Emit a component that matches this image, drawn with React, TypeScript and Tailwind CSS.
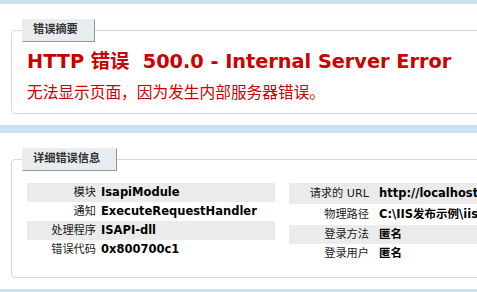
import React from "react";

const leftRows: [string, string][] = [
  ["模块", "IsapiModule"],
  ["通知", "ExecuteRequestHandler"],
  ["处理程序", "ISAPI-dll"],
  ["错误代码", "0x800700c1"],
];

const rightRows: [string, string, string][] = [
  ["请求的 URL", "http://localhost:80/test/default.aspx", "h-[21px]"],
  ["物理路径", "C:\\IIS发布示例\\iis\\test\\default.aspx", "h-[21px]"],
  ["登录方法", "匿名", "h-[19px]"],
  ["登录用户", "匿名", "h-[19px]"],
];

function Legend({ children }: { children: React.ReactNode }) {
  return (
    <legend className="ml-[-5px] pt-[2px] pb-[4px] pl-[10px] pr-[16px] leading-[15px] font-bold text-[#333333] bg-[#E7ECF0] border-t border-l border-t-[#EDEDED] border-l-[#EDEDED] border-r border-b border-r-[#969696] border-b-[#969696]">
      {children}
    </legend>
  );
}

export default function App() {
  return (
    <div className="w-[477px] h-[292px] overflow-hidden bg-[#CBE1EF] pt-[4px] font-['DejaVu_Sans','Noto_Sans_CJK_SC',sans-serif] text-[11.2px]">
      <div className="w-[700px] bg-white pt-[15px] pb-[11px]">
        <fieldset className="ml-[11px] border border-[#D0D8E0] rounded-[4px] pl-[15px] pr-[15px] pb-[10px] min-w-0">
          <Legend>错误摘要</Legend>
          <h2 className="mt-[8px] text-[19.3px] leading-[24px] font-bold text-[#CC0000] whitespace-nowrap">
            HTTP 错误 &nbsp;500.0 - Internal Server Error
          </h2>
          <h3 className="mt-[9px] text-[15.7px] leading-[20px] text-[#CC0000] whitespace-nowrap">
            无法显示页面，因为发生内部服务器错误。
          </h3>
        </fieldset>
      </div>
      <div className="w-[700px] bg-white mt-[8px] pt-[15px] pb-[11px]">
        <fieldset className="ml-[11px] border border-[#D0D8E0] rounded-[4px] pl-[15px] pr-[15px] pb-[14px] min-w-0">
          <Legend>详细错误信息</Legend>
          <div className="mt-[12px] flex items-start gap-[14px]">
            <div className="w-[248px] flex flex-col">
              {leftRows.map(([k, v], i) => (
                <div
                  key={k}
                  className={`h-[19px] flex items-center leading-[13px] ${i % 2 === 0 ? "bg-[#EBEBEB]" : ""}`}
                >
                  <div className="w-[72px] shrink-0 text-right pr-[3px] text-[#1a1a1a] whitespace-nowrap">{k}</div>
                  <div className="pl-[2px] text-[11.5px] font-bold text-black whitespace-nowrap">{v}</div>
                </div>
              ))}
            </div>
            <div className="w-[380px] flex flex-col">
              {rightRows.map(([k, v, h], i) => (
                <div
                  key={k}
                  className={`${h} flex items-center leading-[13px] ${i % 2 === 0 ? "bg-[#EBEBEB]" : ""}`}
                >
                  <div className="w-[85px] shrink-0 text-right pr-[5px] text-[#1a1a1a] whitespace-nowrap">{k}</div>
                  <div className="pl-[5px] text-[11.5px] font-bold text-black whitespace-nowrap">{v}</div>
                </div>
              ))}
            </div>
          </div>
        </fieldset>
      </div>
    </div>
  );
}
